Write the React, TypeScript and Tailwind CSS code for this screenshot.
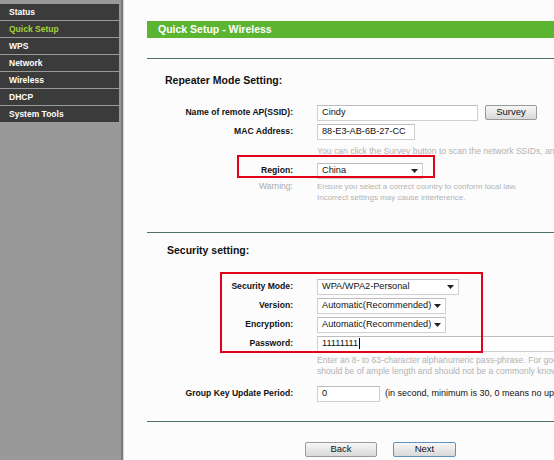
const FONT = { fontFamily: '"Liberation Sans", Arial, sans-serif' };

const MENU = ["Status", "Quick Setup", "WPS", "Network", "Wireless", "DHCP", "System Tools"];

function Arrow() {
    return (
        <svg width="7" height="4" viewBox="0 0 7 4" className="shrink-0">
            <path d="M0 0 H7 L3.5 4 Z" fill="#222" />
        </svg>
    );
}

// text box / select look-alike
function Field({ w, value, select, cursor }: { w: string; value: string; select?: boolean; cursor?: boolean }) {
    return (
        <div
            className={`${w} flex h-[16px] shrink-0 items-center justify-between border border-[#cfcfcf] border-t-[#bcbcbc] bg-white pl-[4px] pr-[4px] text-[9.2px] text-[#111]`}
        >
            <span className="flex items-center">
                {value}
                {cursor && <span className="ml-[1px] inline-block h-[11px] w-[1px] bg-black" />}
            </span>
            {select && <Arrow />}
        </div>
    );
}

function Row({ label, children }: { label: string; children: React.ReactNode }) {
    return (
        <div className="flex h-[19px] items-center">
            <div className="w-[148px] shrink-0 pr-[2px] text-right text-[8.6px] font-bold text-[#111]">{label}</div>
            <div className="ml-[22px] flex items-center">{children}</div>
        </div>
    );
}

function Btn({ label, w, blue }: { label: string; w: string; blue?: boolean }) {
    return (
        <div
            className={`${w} flex h-[15px] items-center justify-center rounded-[2px] border bg-gradient-to-b from-[#f7f7f7] to-[#d9d9d9] text-[9.5px] text-[#111] ${
                blue ? "border-[#5d93c0]" : "border-[#9a9a9a]"
            }`}
        >
            {label}
        </div>
    );
}

export default function App() {
    return (
        <div style={FONT} className="flex h-[460px] w-[554px] overflow-hidden bg-[#fcfcfc]">
            {/* left menu */}
            <div className="flex w-[121px] shrink-0 flex-col gap-[1px] bg-[#999999] pt-[4px]">
                {MENU.map((m) => (
                    <div
                        key={m}
                        className={`flex h-[16px] w-[119px] items-center bg-[#3b3b3b] pl-[9px] text-[8.5px] font-bold ${
                            m === "Quick Setup" ? "text-[#a6d23c]" : "text-white"
                        }`}
                    >
                        {m}
                    </div>
                ))}
            </div>
            <div className="w-[2px] shrink-0 bg-[#7a7a7a]" />
            <div className="w-[1px] shrink-0 bg-[#d6d6d6]" />

            {/* main */}
            <div className="relative min-w-0 flex-1 whitespace-nowrap pl-[23px] pt-[21px]">
                <div className="flex h-[17px] w-[500px] items-center bg-[#5cb531] pl-[11px] text-[10.5px] font-bold text-white">
                    Quick Setup - Wireless
                </div>
                <div className="mt-[20px] h-[1px] w-[500px] bg-[#4f7470]" />

                <div className="mt-[15px] flex h-[14px] items-center pl-[18px] text-[10.5px] font-bold text-[#111]">
                    Repeater Mode Setting:
                </div>

                <div className="mt-[15px]">
                    <Row label="Name of remote AP(SSID):">
                        <Field w="w-[161px]" value="Cindy" />
                        <div className="ml-[7px]">
                            <Btn label="Survey" w="w-[52px]" />
                        </div>
                    </Row>
                    <Row label="MAC Address:">
                        <Field w="w-[98px]" value="88-E3-AB-6B-27-CC" />
                    </Row>
                    <div className="flex h-[20px] items-center pl-[170px] text-[8.6px] text-[#b3b3b3]">
                        You can click the Survey button to scan the network SSIDs, and select one to connect.
                    </div>
                    <Row label="Region:">
                        <Field w="w-[106px]" value="China" select />
                    </Row>
                    <div className="mt-[1px] flex">
                        <div className="w-[148px] shrink-0 pr-[2px] text-right text-[8.6px] leading-[11px] text-[#ababab]">
                            Warning:
                        </div>
                        <div className="ml-[22px] text-[8px] leading-[11px] text-[#b3b3b3]">
                            <div>Ensure you select a correct country to conform local law.</div>
                            <div>Incorrect settings may cause interference.</div>
                        </div>
                    </div>
                </div>

                <div className="mt-[29px] h-[1px] w-[500px] bg-[#4f7470]" />

                <div className="mt-[11px] flex h-[14px] items-center pl-[20px] text-[10.5px] font-bold text-[#111]">
                    Security setting:
                </div>

                <div className="mt-[19px]">
                    <Row label="Security Mode:">
                        <Field w="w-[142px]" value="WPA/WPA2-Personal" select />
                    </Row>
                    <Row label="Version:">
                        <Field w="w-[129px]" value="Automatic(Recommended)" select />
                    </Row>
                    <Row label="Encryption:">
                        <Field w="w-[129px]" value="Automatic(Recommended)" select />
                    </Row>
                    <Row label="Password:">
                        <Field w="w-[260px]" value="11111111" cursor />
                    </Row>
                    <div className="mt-[2px] pl-[170px] text-[8.6px] leading-[11px] text-[#b3b3b3]">
                        <div>Enter an 8- to 63-character alphanumeric pass-phrase. For good security, it</div>
                        <div>should be of ample length and should not be a commonly known phrase.</div>
                    </div>
                    <div className="mt-[7px]">
                        <Row label="Group Key Update Period:">
                            <Field w="w-[63px]" value="0" />
                            <span className="ml-[5px] text-[9px] text-[#111]">
                                (in second, minimum is 30, 0 means no update)
                            </span>
                        </Row>
                    </div>
                </div>

                <div className="mt-[18px] h-[1px] w-[500px] bg-[#4f7470]" />

                <div className="mt-[20px] flex gap-[16px] pl-[158px]">
                    <Btn label="Back" w="w-[72px]" />
                    <Btn label="Next" w="w-[63px]" blue />
                </div>

                {/* annotation boxes */}
                <div className="absolute left-[113px] top-[155px] h-[23px] w-[198px] border-2 border-[#e3001b]" />
                <div className="absolute left-[96px] top-[272px] h-[81px] w-[263px] border-2 border-[#e3001b]" />
            </div>
        </div>
    );
}
